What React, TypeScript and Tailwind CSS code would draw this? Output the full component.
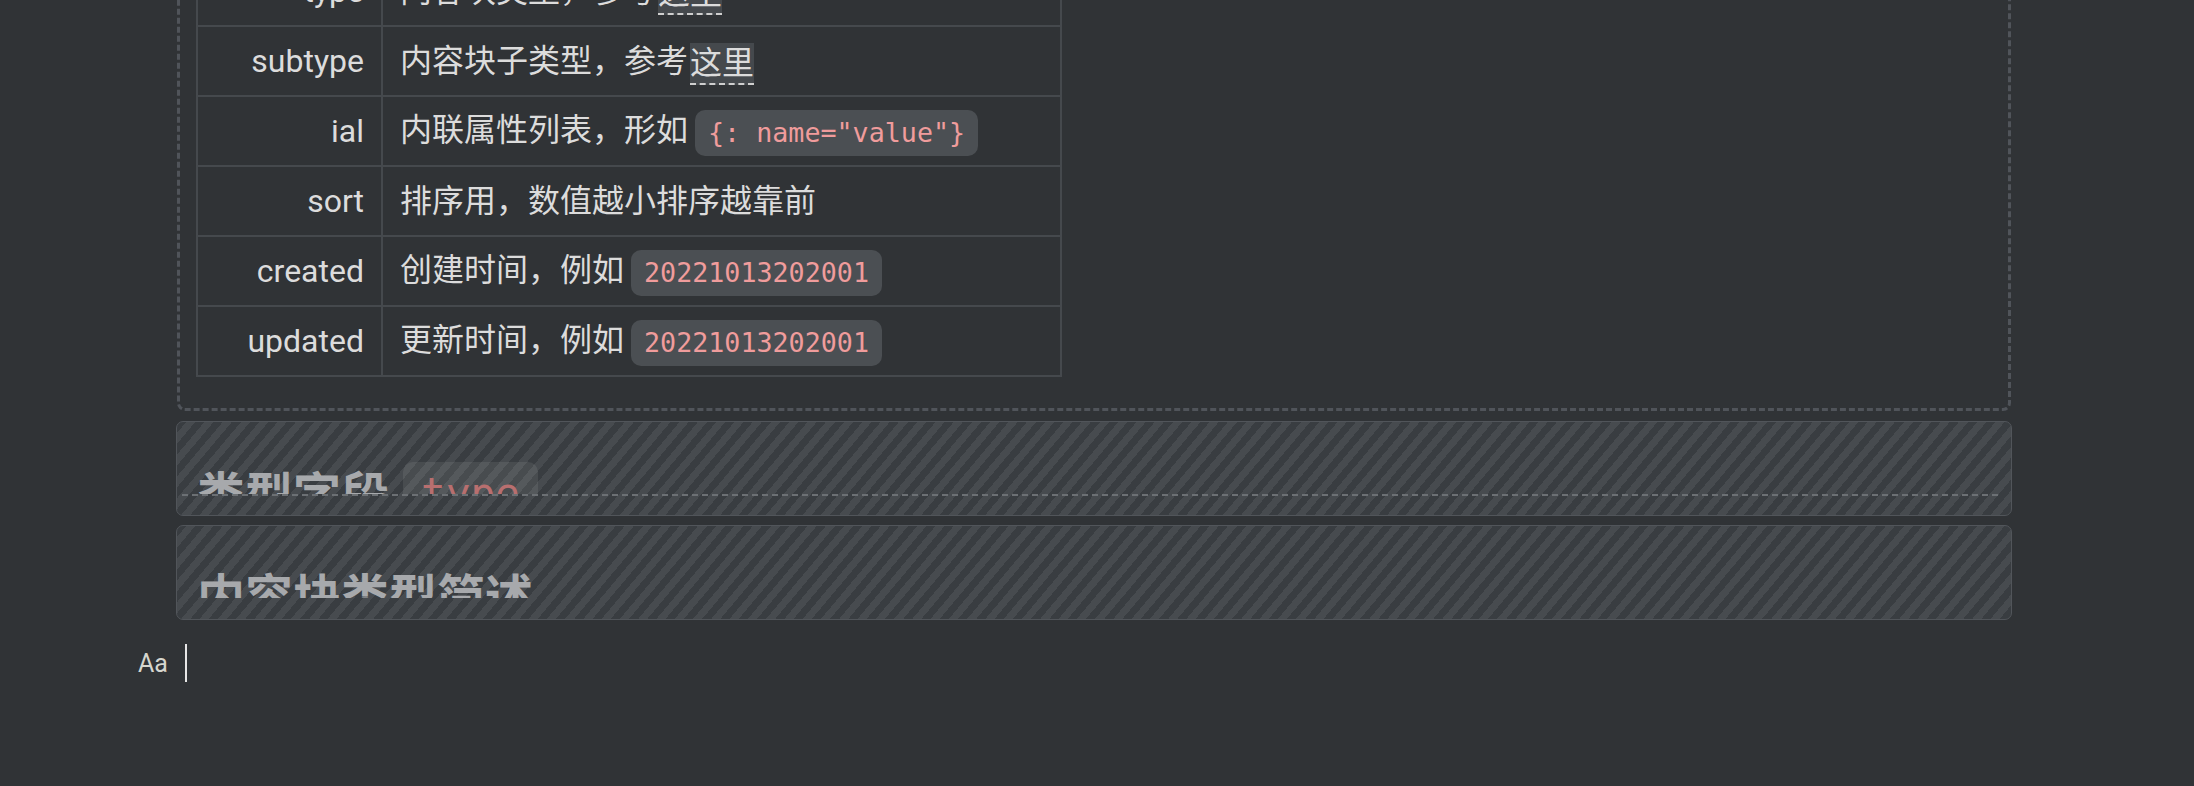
import type { ReactNode } from "react";

const cellBorder = "border-2 border-[#45494d]";

function Ref({ children }: { children: ReactNode }) {
  return (
    <span className="ml-[2px] inline-block h-[42px] border-b-2 border-dashed border-[#cfcfcf] bg-[#45494d] align-middle leading-[40px]">
      {children}
    </span>
  );
}

function Code({ children }: { children: ReactNode }) {
  return (
    <code className="ml-[7px] inline-block h-[46px] rounded-[10px] bg-[#4b4f53] px-[13px] align-middle font-['DejaVu_Sans_Mono',monospace] text-[26.7px] leading-[46px] text-[#f09c9c]">
      {children}
    </code>
  );
}

const rows: { key: string; value: ReactNode }[] = [
  { key: "type", value: <>内容块类型，参考<Ref>这里</Ref></> },
  { key: "subtype", value: <>内容块子类型，参考<Ref>这里</Ref></> },
  { key: "ial", value: <>内联属性列表，形如<Code>{'{: name="value"}'}</Code></> },
  { key: "sort", value: <>排序用，数值越小排序越靠前</> },
  { key: "created", value: <>创建时间，例如<Code>20221013202001</Code></> },
  { key: "updated", value: <>更新时间，例如<Code>20221013202001</Code></> },
];

const stripes =
  "bg-[repeating-linear-gradient(130deg,#393d41_0px,#393d41_7px,#474b4f_7px,#474b4f_14px)]";

export default function App() {
  return (
    <div className="h-[786px] overflow-hidden bg-[#303336] font-['Roboto','Noto_Sans_CJK_SC',sans-serif] text-[#dcdcdc]">
      <div className="-mt-[64px] ml-[177px] w-[1834px]">
        {/* table block with dashed outline */}
        <div className="rounded-[8px] border-[3px] border-dashed border-[#50545a] pb-[31px] pl-[16px] pt-[16px]">
          <table className="w-[866px] border-collapse text-[32px]">
            <tbody>
              {rows.map(r => (
                <tr key={r.key} className="h-[70px]">
                  <td className={`w-[185px] px-[17px] py-0 text-right align-middle ${cellBorder}`}>{r.key}</td>
                  <td className={`px-[17px] py-0 align-middle ${cellBorder}`}>{r.value}</td>
                </tr>
              ))}
            </tbody>
          </table>
        </div>

        {/* folded heading 1 */}
        <div className={`-mx-[1px] mt-[10px] h-[95px] overflow-hidden rounded-[7px] border border-[#51555a] ${stripes}`}>
          <div className="ml-[5px] mr-[9px] h-[72px] overflow-hidden pl-[15px]">
            <div className="pt-[39px] font-['Noto_Sans_CJK_SC',sans-serif] text-[48px] font-bold leading-[60px] text-[#a7a9ac]">
              类型字段
              <code className="ml-[14px] mt-[1px] inline-block h-[58px] rounded-[10px] bg-[#ffffff14] px-[18px] pt-[7px] align-top font-['DejaVu_Sans_Mono',monospace] text-[41px] font-normal leading-[48px] text-[#b86f6f]">
                type
              </code>
            </div>
          </div>
          <div className="ml-[5px] mr-[9px] h-[2px] bg-[repeating-linear-gradient(90deg,#6c7074_0px,#6c7074_6px,transparent_6px,transparent_10px)]" />
        </div>

        {/* folded heading 2 */}
        <div className={`-mx-[1px] mt-[9px] h-[95px] overflow-hidden rounded-[7px] border border-[#51555a] ${stripes}`}>
          <div className="ml-[5px] mr-[9px] h-[72px] overflow-hidden pl-[15px]">
            <div className="pt-[37px] font-['Noto_Sans_CJK_SC',sans-serif] text-[48px] font-bold leading-[60px] text-[#a7a9ac]">
              内容块类型简述
            </div>
          </div>
        </div>
      </div>

      {/* empty paragraph with caret */}
      <div className="mt-[24px] flex h-[38px] items-center pl-[138px]">
        <span className="w-[47px] text-[25px] leading-none text-[#d6d6ce]">Aa</span>
        <span className="h-[38px] w-[2px] bg-[#e6e6e6]" />
      </div>
    </div>
  );
}
